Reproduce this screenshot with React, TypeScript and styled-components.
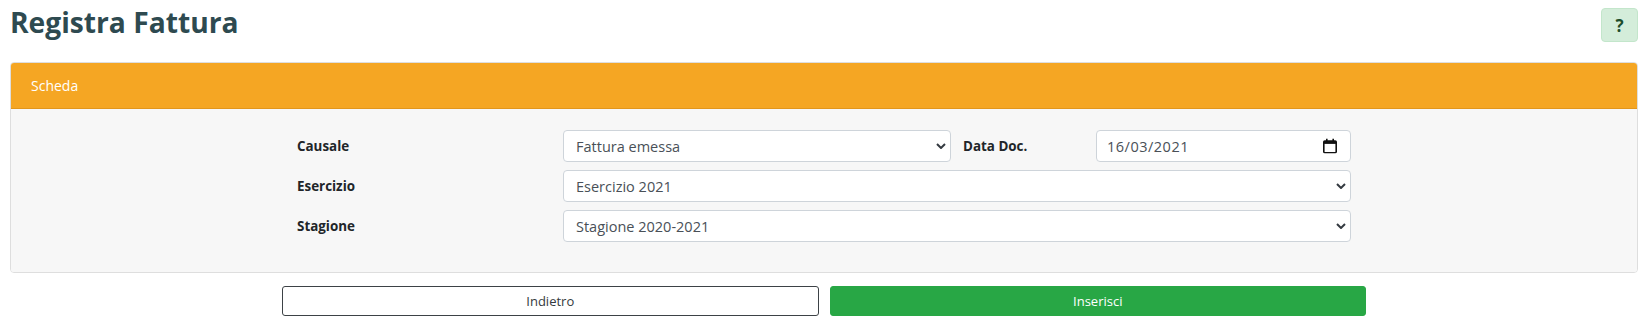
import styled, { createGlobalStyle } from "styled-components";

const GlobalStyle = createGlobalStyle`
  body {
    margin: 0;
    background: #ffffff;
    font-family: "Open Sans", "Liberation Sans", sans-serif;
  }
  * {
    box-sizing: border-box;
  }
`;

const Page = styled.div`
  padding: 5px 12px 0 10px;
`;

const TopBar = styled.div`
  height: 47px;
  display: flex;
  justify-content: space-between;
  align-items: flex-start;
`;

const Title = styled.h1`
  margin: 0;
  font-size: 28.2px;
  line-height: 34px;
  font-weight: 700;
  color: #2e4a50;
`;

const HelpButton = styled.button`
  margin-top: 3px;
  width: 37px;
  height: 34px;
  border: 1px solid #c3e6cb;
  border-radius: 4px;
  background: #d4edda;
  color: #1d4d2b;
  font-family: "Open Sans", "Liberation Sans", sans-serif;
  font-size: 17px;
  font-weight: 700;
  padding: 0;
`;

const Card = styled.div`
  margin-top: 10px;
  border: 1px solid #dedede;
  border-radius: 4px;
  overflow: hidden;
`;

const CardHeader = styled.div`
  height: 46px;
  display: flex;
  align-items: center;
  padding-left: 20px;
  background: #f5a623;
  border-bottom: 1px solid #e2961c;
  color: #ffffff;
  font-size: 14px;
`;

const CardBody = styled.div`
  background: #f7f7f7;
  padding: 21px 0 30px;
`;

const FormGrid = styled.div`
  width: 1054px;
  margin: 0 auto;
  display: flex;
  flex-direction: column;
  gap: 8px;
`;

const FormRow = styled.div`
  display: grid;
  grid-template-columns: 266px 1fr;
  align-items: center;
`;

const Label = styled.label<{ $inline?: boolean }>`
  font-size: 13.4px;
  font-weight: 700;
  color: #212529;
  ${({ $inline }) => $inline && "width: 133px; margin-left: 12px; flex: none;"}
`;

const FieldLine = styled.div`
  display: flex;
  align-items: center;
`;

const FieldWrap = styled.div<{ $width?: number }>`
  position: relative;
  ${({ $width }) => ($width ? `width: ${$width}px; flex: none;` : "flex: 1;")}
`;

const Select = styled.select`
  width: 100%;
  height: 32px;
  appearance: none;
  border: 1px solid #ced4da;
  border-radius: 4px;
  background: #ffffff;
  padding: 0 24px 0 12px;
  font-family: "Open Sans", "Liberation Sans", sans-serif;
  font-size: 14.5px;
  color: #495057;
  outline: none;
`;

const TextInput = styled.input`
  width: 100%;
  height: 32px;
  border: 1px solid #ced4da;
  border-radius: 4px;
  background: #ffffff;
  padding: 0 30px 0 10px;
  font-family: "Open Sans", "Liberation Sans", sans-serif;
  font-size: 14.5px;
  letter-spacing: 0.5px;
  color: #495057;
  outline: none;
`;

const FieldIcon = styled.span<{ $right: number }>`
  position: absolute;
  top: 50%;
  right: ${({ $right }) => $right}px;
  transform: translateY(-50%);
  display: flex;
  pointer-events: none;
`;

const Actions = styled.div`
  width: 1084px;
  margin: 13px auto 0;
  display: grid;
  grid-template-columns: 1fr 1fr;
  gap: 11px;
`;

const ActionButton = styled.button<{ $primary?: boolean }>`
  height: 30px;
  border-radius: 3px;
  font-family: "Open Sans", "Liberation Sans", sans-serif;
  font-size: 13px;
  border: 1px solid ${({ $primary }) => ($primary ? "#28a745" : "#3d4246")};
  background: ${({ $primary }) => ($primary ? "#28a745" : "#ffffff")};
  color: ${({ $primary }) => ($primary ? "#ffffff" : "#343a40")};
`;

const Chevron = () => (
  <svg width="10" height="6" viewBox="0 0 10 6">
    <path d="M1 1 L5 5 L9 1" fill="none" stroke="#343a40" strokeWidth="2" />
  </svg>
);

const CalendarIcon = () => (
  <svg width="14" height="15" viewBox="0 0 14 15">
    <rect x="3" y="0" width="1.6" height="3" fill="#111" />
    <rect x="9.4" y="0" width="1.6" height="3" fill="#111" />
    <rect x="0.8" y="2.6" width="12.4" height="11.6" rx="1" fill="none" stroke="#111" strokeWidth="1.6" />
    <rect x="0.8" y="2.6" width="12.4" height="2.8" fill="#111" />
  </svg>
);

const SelectField = ({ value }: { value: string }) => (
  <FieldWrap>
    <Select defaultValue={value}>
      <option>{value}</option>
    </Select>
    <FieldIcon $right={5}>
      <Chevron />
    </FieldIcon>
  </FieldWrap>
);

const App = () => {
  return (
    <Page>
      <GlobalStyle />
      <TopBar>
        <Title>Registra Fattura</Title>
        <HelpButton>?</HelpButton>
      </TopBar>
      <Card>
        <CardHeader>Scheda</CardHeader>
        <CardBody>
          <FormGrid>
            <FormRow>
              <Label>Causale</Label>
              <FieldLine>
                <SelectField value="Fattura emessa" />
                <Label $inline>Data Doc.</Label>
                <FieldWrap $width={255}>
                  <TextInput readOnly value="16/03/2021" />
                  <FieldIcon $right={14}>
                    <CalendarIcon />
                  </FieldIcon>
                </FieldWrap>
              </FieldLine>
            </FormRow>
            <FormRow>
              <Label>Esercizio</Label>
              <SelectField value="Esercizio 2021" />
            </FormRow>
            <FormRow>
              <Label>Stagione</Label>
              <SelectField value="Stagione 2020-2021" />
            </FormRow>
          </FormGrid>
        </CardBody>
      </Card>
      <Actions>
        <ActionButton>Indietro</ActionButton>
        <ActionButton $primary>Inserisci</ActionButton>
      </Actions>
    </Page>
  );
};

export default App;
